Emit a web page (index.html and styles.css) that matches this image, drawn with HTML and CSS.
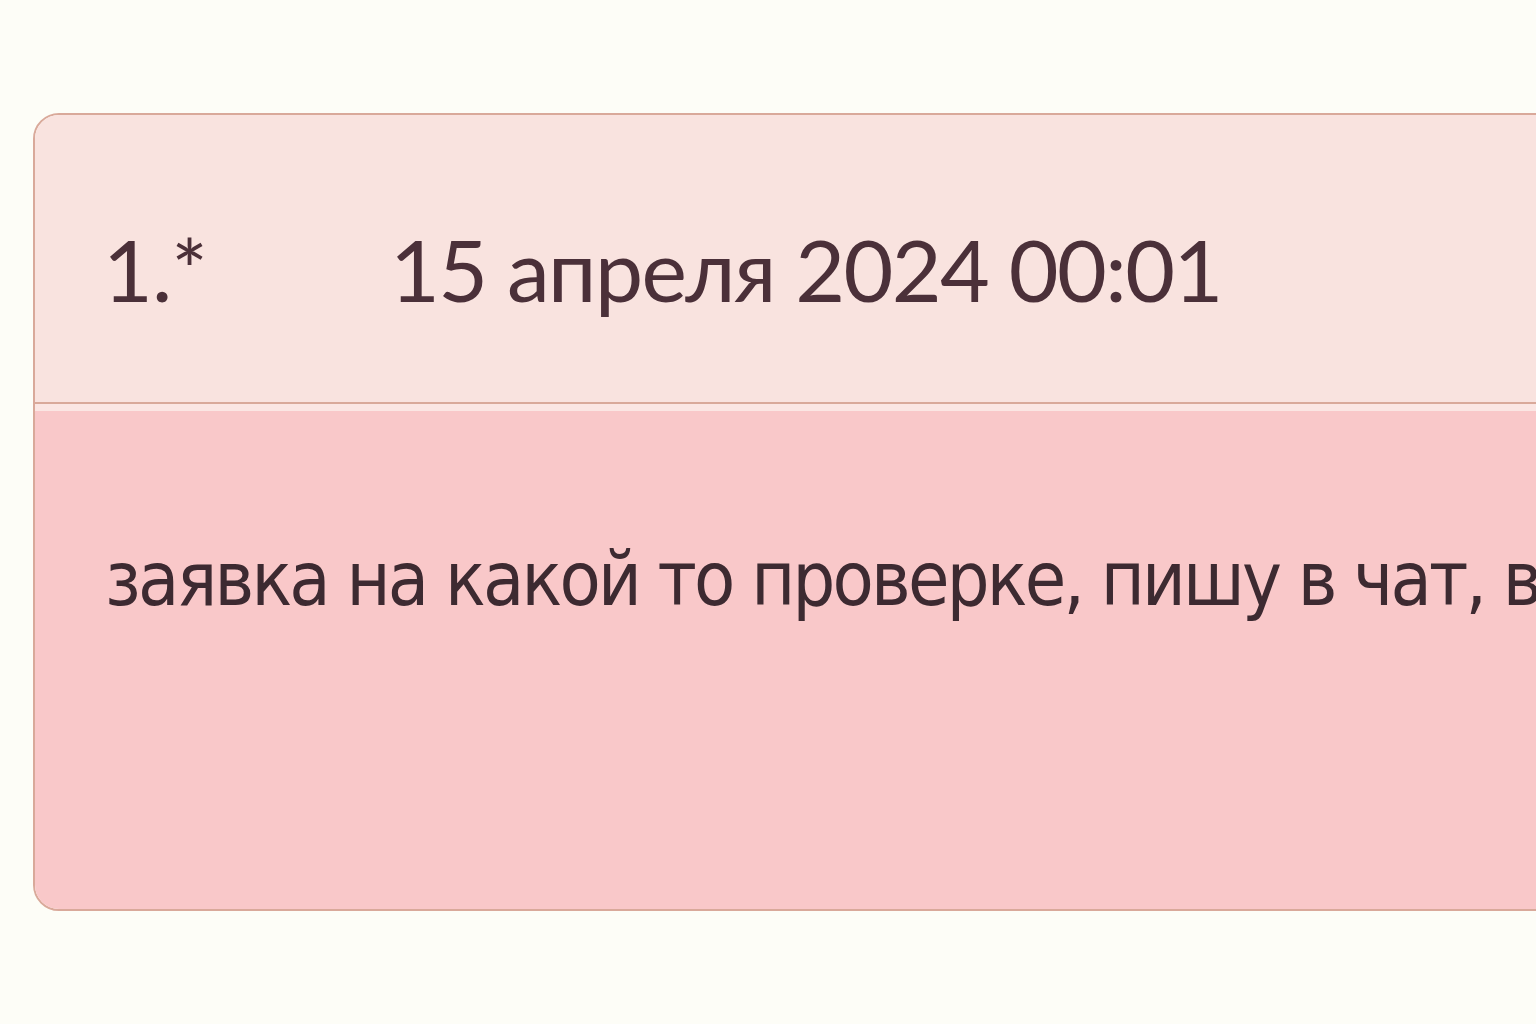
FILE: index.html
```html
<!DOCTYPE html>
<html lang="ru">
<head>
    <meta charset="UTF-8">
    <meta name="viewport" content="width=device-width, initial-scale=1.0">
    <title>Заявки</title>
    <link rel="stylesheet" href="styles.css">
</head>
<body>
    <div class="card">
        <div class="card-head">
            <span class="num">1.*</span>
            <span class="date">15 апреля 2024 00:01</span>
        </div>
        <div class="card-body">
            <p class="msg">заявка на какой то проверке, пишу в чат, в поддержку, никто не отвечает</p>
        </div>
    </div>
</body>
</html>
```

FILE: styles.css
```css
*{
    margin: 0;
    padding: 0;
    box-sizing: border-box;
}
html, body{
    overflow: hidden;
}
body{
    background-color: #fdfdf7;
    padding: 113px 0 0 33px;
    height: 1024px;
    font-family: Lato, "Noto Sans", sans-serif;
    color: #4b3039;
}
.card{
    width: 1700px;
    border: 2px solid #d9a99a;
    border-radius: 26px;
    overflow: hidden;
}
.card-head{
    display: flex;
    align-items: center;
    height: 289px;
    padding: 20px 0 0 68px;
    background-color: #f9e3df;
    border-bottom: 2px solid #d9a99a;
}
.num{
    font-size: 86px;
    width: 287px;
    letter-spacing: -1px;
}
.date{
    font-size: 86px;
    letter-spacing: -1.6px;
}
.card-body{
    height: 505px;
    background-color: #f9c8c9;
    border-top: 7px solid #fbe6e3;
    padding: 124px 0 0 70px;
}
.msg{
    font-family: "DejaVu Sans Condensed", "DejaVu Sans", sans-serif;
    font-size: 75px;
    letter-spacing: -2.8px;
    white-space: nowrap;
    color: #3d2a31;
}
```
